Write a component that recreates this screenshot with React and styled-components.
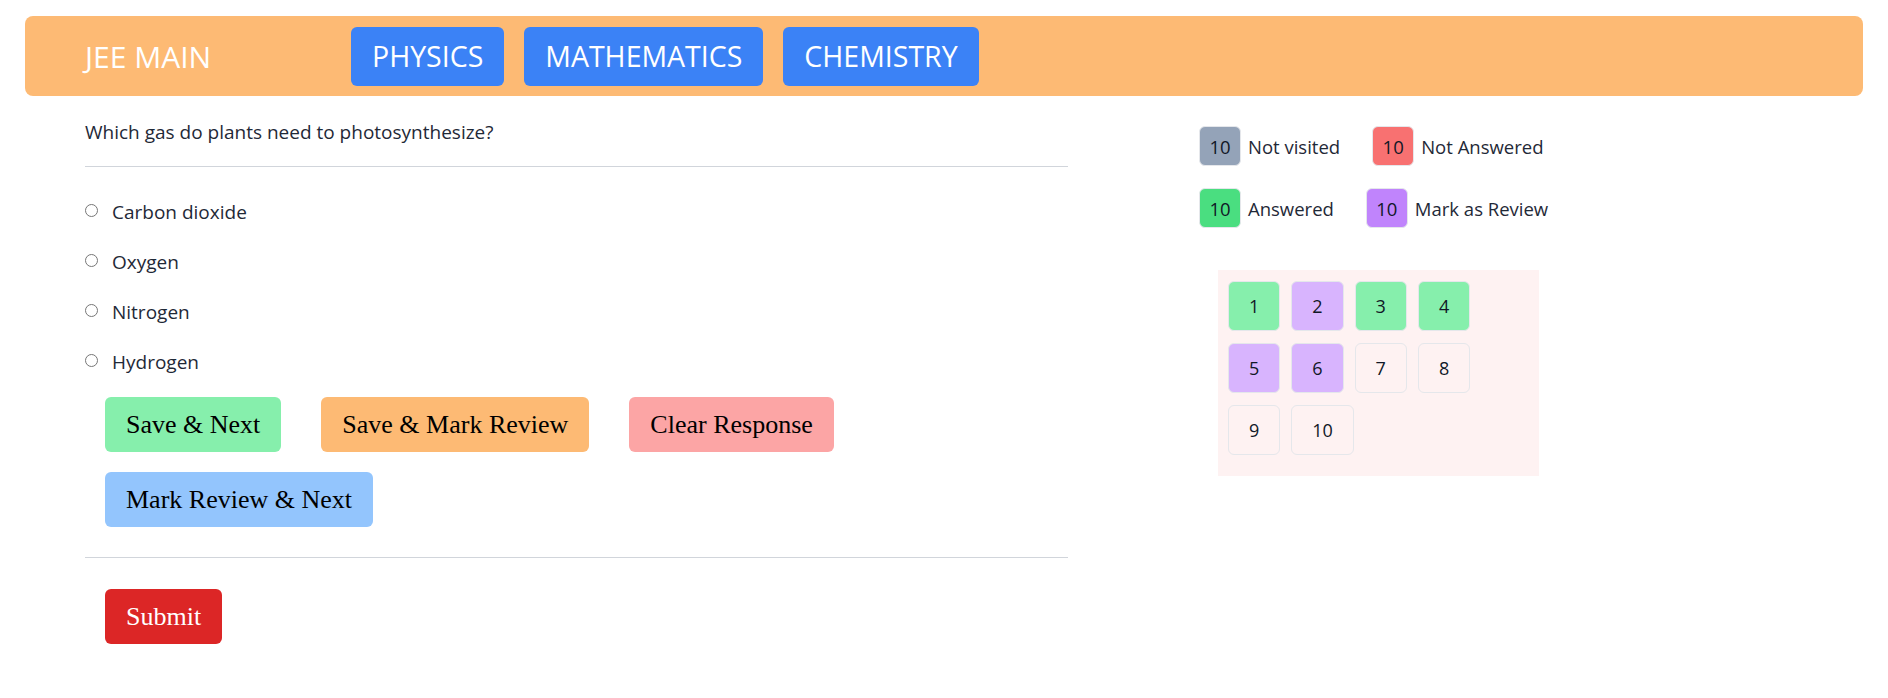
import React from 'react'
import styled, { createGlobalStyle } from 'styled-components'

const GlobalStyle = createGlobalStyle`
  body {
    margin: 0;
    background: #ffffff;
    font-family: "Open Sans", "Noto Sans", sans-serif;
    color: #1f2937;
  }
`

const Header = styled.header`
  margin: 16px 25px 0;
  height: 80px;
  padding-left: 60px;
  display: flex;
  align-items: center;
  background: #fdba74;
  border-radius: 8px;
`

const Brand = styled.div`
  width: 266px;
  color: #ffffff;
  font-size: 30px;
`

const Tabs = styled.nav`
  display: flex;
  gap: 20px;
`

const Tab = styled.button`
  height: 59px;
  padding: 0 21px;
  border: none;
  border-radius: 6px;
  background: #3b82f6;
  color: #ffffff;
  font-family: "Open Sans", sans-serif;
  font-size: 28.5px;
  cursor: pointer;
`

const Main = styled.main`
  display: flex;
  align-items: flex-start;
`

const QuestionColumn = styled.section`
  width: 983px;
  margin-left: 85px;
`

const QuestionText = styled.p`
  margin: 23px 0 20px;
  font-size: 19px;
  line-height: 27px;
`

const Divider = styled.hr`
  margin: 0;
  border: none;
  border-top: 1px solid #d1d5db;
`

const Options = styled.div`
  padding-top: 20px;
  display: flex;
  flex-direction: column;
`

const Option = styled.label`
  height: 50px;
  display: flex;
  align-items: center;
  gap: 14px;
  font-size: 19px;
  cursor: pointer;

  input {
    width: 13px;
    height: 13px;
    margin: -4px 0 0;
  }
`

const ActionRow = styled.div`
  padding: ${(p) => p.$pad};
  display: flex;
  flex-wrap: wrap;
  gap: 20px 40px;
`

const Action = styled.button`
  height: 55px;
  padding: 0 21px;
  border: none;
  border-radius: 6px;
  background: ${(p) => p.$bg};
  color: ${(p) => p.$fg || '#000000'};
  font-family: "Liberation Serif", "Times New Roman", serif;
  font-size: 26px;
  cursor: pointer;
`

const SideColumn = styled.aside`
  margin-left: 131px;
  padding-top: 30px;
`

const Legend = styled.div`
  width: 370px;
  display: flex;
  flex-wrap: wrap;
  gap: 22px 32px;
`

const LegendItem = styled.div`
  display: flex;
  align-items: center;
  gap: 7px;
  font-size: 18.5px;
`

const Count = styled.span`
  width: 42px;
  height: 40px;
  box-sizing: border-box;
  display: flex;
  align-items: center;
  justify-content: center;
  border: 1px solid #e5e7eb;
  border-radius: 6px;
  background: ${(p) => p.$bg};
  color: #111827;
`

const Palette = styled.div`
  width: 321px;
  box-sizing: border-box;
  margin: 42px 0 0 19px;
  padding: 11px 10px 21px;
  display: flex;
  flex-wrap: wrap;
  gap: 12px 11px;
  background: #fef2f2;
`

const Cell = styled.button`
  height: 50px;
  padding: 0 20px;
  border: 1px solid #e5e7eb;
  border-radius: 6px;
  background: ${(p) => p.$bg || 'transparent'};
  color: #111827;
  font-family: "Open Sans", sans-serif;
  font-size: 18px;
  cursor: pointer;
`

const options = ['Carbon dioxide', 'Oxygen', 'Nitrogen', 'Hydrogen']

const legend = [
  { label: 'Not visited', bg: '#94a3b8' },
  { label: 'Not Answered', bg: '#f87171' },
  { label: 'Answered', bg: '#4ade80' },
  { label: 'Mark as Review', bg: '#c084fc' },
]

const cellColors = {
  answered: '#86efac',
  review: '#d8b4fe',
}

const cells = [
  'answered', 'review', 'answered', 'answered',
  'review', 'review', null, null, null, null,
]

export default function App() {
  return (
    <>
      <GlobalStyle />
      <Header>
        <Brand>JEE MAIN</Brand>
        <Tabs>
          <Tab>PHYSICS</Tab>
          <Tab>MATHEMATICS</Tab>
          <Tab>CHEMISTRY</Tab>
        </Tabs>
      </Header>

      <Main>
        <QuestionColumn>
          <QuestionText>Which gas do plants need to photosynthesize?</QuestionText>
          <Divider />
          <Options>
            {options.map((o) => (
              <Option key={o}>
                <input type="radio" name="answer" value={o} />
                {o}
              </Option>
            ))}
          </Options>

          <ActionRow $pad="10px 0 30px 20px">
            <Action $bg="#86efac">Save &amp; Next</Action>
            <Action $bg="#fdba74">Save &amp; Mark Review</Action>
            <Action $bg="#fca5a5">Clear Response</Action>
            <Action $bg="#93c5fd">Mark Review &amp; Next</Action>
          </ActionRow>
          <Divider />
          <ActionRow $pad="31px 0 0 20px">
            <Action $bg="#dc2626" $fg="#ffffff">Submit</Action>
          </ActionRow>
        </QuestionColumn>

        <SideColumn>
          <Legend>
            {legend.map((l) => (
              <LegendItem key={l.label}>
                <Count $bg={l.bg}>10</Count>
                {l.label}
              </LegendItem>
            ))}
          </Legend>
          <Palette>
            {cells.map((c, i) => (
              <Cell key={i} $bg={c && cellColors[c]}>
                {i + 1}
              </Cell>
            ))}
          </Palette>
        </SideColumn>
      </Main>
    </>
  )
}
